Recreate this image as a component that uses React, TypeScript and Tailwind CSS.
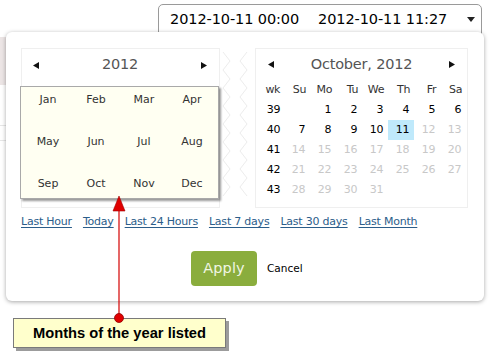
import React from "react";

const MONTHS = ["Jan", "Feb", "Mar", "Apr", "May", "Jun", "Jul", "Aug", "Sep", "Oct", "Nov", "Dec"];
const DAY_HEADS = ["wk", "Su", "Mo", "Tu", "We", "Th", "Fr", "Sa"];
const WEEKS: { wk: number; days: (number | null)[] }[] = [
  { wk: 39, days: [null, 1, 2, 3, 4, 5, 6] },
  { wk: 40, days: [7, 8, 9, 10, 11, 12, 13] },
  { wk: 41, days: [14, 15, 16, 17, 18, 19, 20] },
  { wk: 42, days: [21, 22, 23, 24, 25, 26, 27] },
  { wk: 43, days: [28, 29, 30, 31, null, null, null] },
];
const LINKS = ["Last Hour", "Today", "Last 24 Hours", "Last 7 days", "Last 30 days", "Last Month"];
const TODAY = 11;

function Arrow({ dir }: { dir: "left" | "right" }) {
  return (
    <svg width="6" height="7" viewBox="0 0 6 7" className="block">
      {dir === "left" ? <polygon points="0,3.5 6,0 6,7" fill="#111" /> : <polygon points="6,3.5 0,0 0,7" fill="#111" />}
    </svg>
  );
}

function Zigzag() {
  const pts = (x0: number, x1: number) => {
    const out: string[] = [];
    for (let y = 0, i = 0; y <= 150; y += 9, i++) out.push(`${i % 2 ? x1 : x0},${y}`);
    return out.join(" ");
  };
  return (
    <svg width="35" height="152" viewBox="0 0 35 152" className="block mt-[4px]">
      <polyline points={pts(3, 10)} fill="none" stroke="#ececec" strokeWidth="1" />
      <polyline points={pts(27, 20)} fill="none" stroke="#ececec" strokeWidth="1" />
    </svg>
  );
}

function YearPanel() {
  return (
    <div className="w-[199px] h-[160px] border border-[#efefef]">
      <div className="h-[32px] flex items-center justify-between pl-[11px] pr-[12px]">
        <Arrow dir="left" />
        <span className="text-[14.5px] text-[#555] tracking-[-0.2px]">2012</span>
        <Arrow dir="right" />
      </div>
      <div className="-ml-[2px] mt-[5px] w-[199px] border border-[#a9a9a9] bg-[#fffff2] shadow-[2px_2px_2px_rgba(0,0,0,0.4)] pl-[3px] pt-0 pb-[1px] grid grid-cols-[repeat(4,48px)] gap-y-[16px]">
        {MONTHS.map((m) => (
          <div key={m} className="h-[26px] flex items-center justify-center text-[11px] text-[#333]">
            {m}
          </div>
        ))}
      </div>
    </div>
  );
}

function MonthPanel() {
  return (
    <div className="w-[213px] h-[160px] border border-[#efefef]">
      <div className="h-[31px] flex items-center justify-between pl-[12px] pr-[12px]">
        <Arrow dir="left" />
        <span className="text-[14.5px] text-[#555] tracking-[-0.2px]">October, 2012</span>
        <Arrow dir="right" />
      </div>
      <div className="pl-[2px] text-[11px] tracking-[-0.4px]">
        <div className="grid grid-cols-[repeat(8,26px)] h-[20px] items-center text-[#333]">
          {DAY_HEADS.map((d) => (
            <div key={d} className="text-right pr-[4px]">
              {d}
            </div>
          ))}
        </div>
        {WEEKS.map((w) => (
          <div key={w.wk} className="grid grid-cols-[repeat(8,26px)] h-[20px] items-stretch">
            <div className="text-right pr-[4px] flex items-center justify-end text-black">{w.wk}</div>
            {w.days.map((d, i) => (
              <div
                key={i}
                className={`flex items-center justify-end pr-[5px] ${
                  d === TODAY ? "bg-[#bfe9fb] text-black" : d && d > TODAY ? "text-[#c8c8c8]" : "text-black"
                }`}
              >
                {d ?? ""}
              </div>
            ))}
          </div>
        ))}
      </div>
    </div>
  );
}

export default function App() {
  return (
    <div className="relative w-[489px] h-[352px] overflow-hidden bg-white font-['DejaVu_Sans',sans-serif]">
      {/* sliver of the page behind the popup */}
      <div className="absolute left-0 top-[37px] w-[6px] h-[48px] bg-[#ece5e5]" />
      <div className="absolute left-0 top-[125px] w-[6px] h-px bg-[#e6e6e6]" />
      <div className="absolute left-0 top-[140px] w-[6px] h-px bg-[#e6e6e6]" />

      <div className="pt-[4px] pl-[158px]">
        <div className="w-[324px] h-[32px] border border-[#9a9a9a] rounded-t-[5px] flex pt-[6px] pl-[11px] text-[14.5px] leading-[16px] text-black">
          <span className="tracking-[-0.1px]">2012-10-11 00:00</span>
          <span className="ml-[19px] tracking-[-0.1px]">2012-10-11 11:27</span>
          <svg width="8" height="5" viewBox="0 0 8 5" className="ml-[20px] mt-[6px]">
            <polygon points="0,0 8,0 4,5" fill="#222" />
          </svg>
        </div>
      </div>

      <div className="relative -mt-[4px] ml-[6px] w-[478px] h-[269px] rounded-[6px] bg-white shadow-[0_1px_4px_rgba(0,0,0,0.35)] pt-[16px] pl-[15px]">
        <div className="flex">
          <YearPanel />
          <Zigzag />
          <MonthPanel />
        </div>

        <div className="mt-[7px] flex gap-[11px] text-[11px] leading-[14px] tracking-[-0.22px]">
          {LINKS.map((l) => (
            <a key={l} className="text-[#2b5d8a] underline underline-offset-2">
              {l}
            </a>
          ))}
        </div>

        <div className="mt-[22px] pl-[170px] flex items-center gap-[10px]">
          <button className="w-[66px] h-[35px] rounded-[4px] bg-[#8aad3d] text-[#f0f6e4] text-[14.5px] tracking-[0.1px]">
            Apply
          </button>
          <span className="text-[10.5px] text-black">Cancel</span>
        </div>
      </div>

      {/* annotation */}
      <div className="absolute left-[13px] top-[318px] w-[213px] h-[30px] border border-[#7a7a7a] bg-[#ffffcc] shadow-[3px_3px_0_#9c9c9c] flex items-center justify-center font-['Liberation_Sans',Arial,sans-serif] font-bold text-[14.7px] text-black">
        Months of the year listed
      </div>
      <svg className="absolute left-[110px] top-[194px]" width="18" height="132" viewBox="0 0 18 132">
        <line x1="9" y1="14" x2="9" y2="124" stroke="#d40000" strokeWidth="1.2" />
        <polygon points="9,2 3,17 15,17" fill="#e00000" stroke="#a00000" strokeWidth="0.6" />
        <circle cx="9" cy="124" r="4.5" fill="#e00000" stroke="#900000" strokeWidth="0.8" />
      </svg>
    </div>
  );
}
